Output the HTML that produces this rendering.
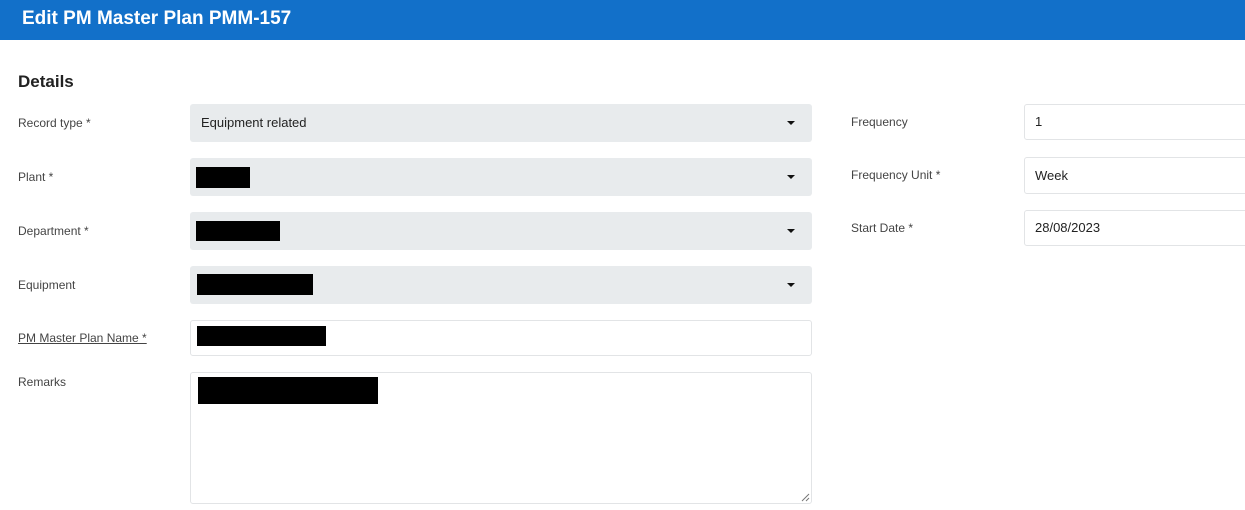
<!DOCTYPE html>
<html><head><style>
body{margin:0;width:1245px;height:510px;overflow:hidden;background:#fff;font-family:"Liberation Sans",sans-serif;position:relative}
.hd{position:absolute;left:0;top:0;width:1245px;height:40px;background:#1270c9;color:#fff;font-weight:bold;font-size:19px;line-height:38px;padding-left:22px;box-sizing:border-box}
.t{position:absolute;left:18px;top:72px;font-size:17px;color:#222;font-weight:bold}
.l{position:absolute;font-size:12px;color:#444}
.s{position:absolute;left:190px;width:622px;height:38px;background:#e8ebed;border-radius:3px;box-sizing:border-box}
.s:after{content:"";position:absolute;left:597px;top:17px;border-left:4px solid transparent;border-right:4px solid transparent;border-top:4px solid #111}
.i{position:absolute;background:#fff;border:1px solid #e2e4e6;border-radius:3px;box-sizing:border-box;font-size:13px;color:#222;padding-left:10px}
.b{position:absolute;background:#000}
</style></head><body>
<div class="hd">Edit PM Master Plan PMM-157</div>
<div class="t">Details</div>
<div class="l" style="left:18px;top:116px">Record type *</div>
<div class="s" style="top:104px"><span style="position:absolute;left:11px;top:11px;font-size:13px;color:#222">Equipment related</span></div>
<div class="l" style="left:18px;top:170px">Plant *</div>
<div class="s" style="top:158px"></div><div class="b" style="left:196px;top:167px;width:54px;height:21px"></div>
<div class="l" style="left:18px;top:224px">Department *</div>
<div class="s" style="top:212px"></div><div class="b" style="left:196px;top:221px;width:84px;height:20px"></div>
<div class="l" style="left:18px;top:278px">Equipment</div>
<div class="s" style="top:266px"></div><div class="b" style="left:197px;top:274px;width:116px;height:21px"></div>
<div class="l" style="left:18px;top:331px;text-decoration:underline">PM Master Plan Name *</div>
<div class="i" style="left:190px;top:320px;width:622px;height:36px"></div><div class="b" style="left:197px;top:326px;width:129px;height:20px"></div>
<div class="l" style="left:18px;top:375px">Remarks</div>
<div class="i" style="left:190px;top:372px;width:622px;height:132px"><svg style="position:absolute;right:1px;bottom:1px" width="9" height="9"><path d="M8 1L1 8M8 5L5 8" stroke="#777" stroke-width="1"/></svg></div><div class="b" style="left:198px;top:377px;width:180px;height:27px"></div>
<div class="l" style="left:851px;top:115px">Frequency</div>
<div class="i" style="left:1024px;top:104px;width:240px;height:36px;line-height:34px">1</div>
<div class="l" style="left:851px;top:168px">Frequency Unit *</div>
<div class="i" style="left:1024px;top:157px;width:240px;height:37px;line-height:35px">Week</div>
<div class="l" style="left:851px;top:221px">Start Date *</div>
<div class="i" style="left:1024px;top:210px;width:240px;height:36px;line-height:34px">28/08/2023</div>
</body></html>
